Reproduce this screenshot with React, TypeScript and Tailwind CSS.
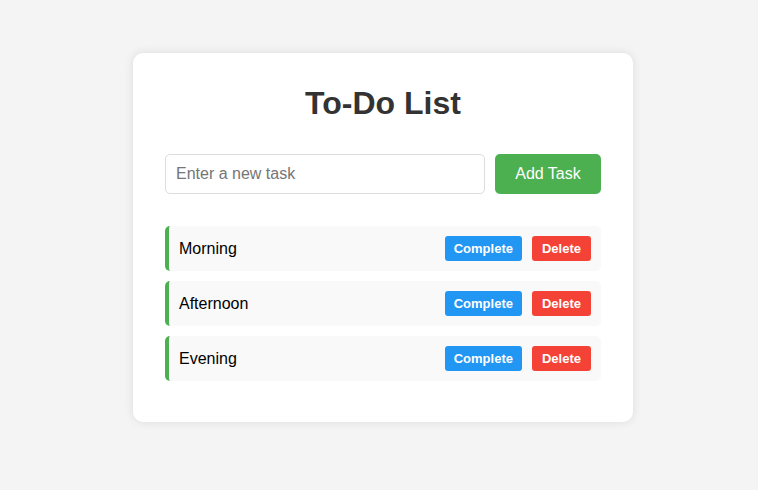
const tasks = ["Morning", "Afternoon", "Evening"];

export default function App() {
  return (
    <div
      className="min-h-screen w-full bg-[#f4f4f4] flex justify-center pt-[53px] pl-2"
      style={{ fontFamily: '"Liberation Sans", Arial, sans-serif' }}
    >
      <div className="w-[500px] h-fit bg-white rounded-[10px] shadow-[0_0_10px_rgba(0,0,0,0.1)] px-8 pt-8 pb-[31px]">
        <h1 className="text-[32px] leading-[37px] font-bold text-[#333] text-center mb-8">To-Do List</h1>

        <div className="flex gap-[10px] mb-8">
          <input
            type="text"
            placeholder="Enter a new task"
            className="w-[320px] h-10 border border-[#ddd] rounded-[5px] px-[10px] text-base text-[#333] placeholder:text-[#757575] outline-none"
          />
          <button className="flex-1 h-10 bg-[#4caf50] text-white text-base rounded-[5px]">Add Task</button>
        </div>

        <ul>
          {tasks.map((t) => (
            <li
              key={t}
              className="flex items-center justify-between bg-[#f9f9f9] border-l-4 border-[#4caf50] rounded-[5px] p-[10px] mb-[10px]"
            >
              <span className="text-base text-black">{t}</span>
              <div className="flex gap-[10px]">
                <button className="bg-[#2196f3] text-white text-[13px] leading-[15px] font-bold px-[9px] py-[5px] rounded-[3px]">
                  Complete
                </button>
                <button className="bg-[#f44336] text-white text-[13px] leading-[15px] font-bold px-[10px] py-[5px] rounded-[3px]">
                  Delete
                </button>
              </div>
            </li>
          ))}
        </ul>
      </div>
    </div>
  );
}
